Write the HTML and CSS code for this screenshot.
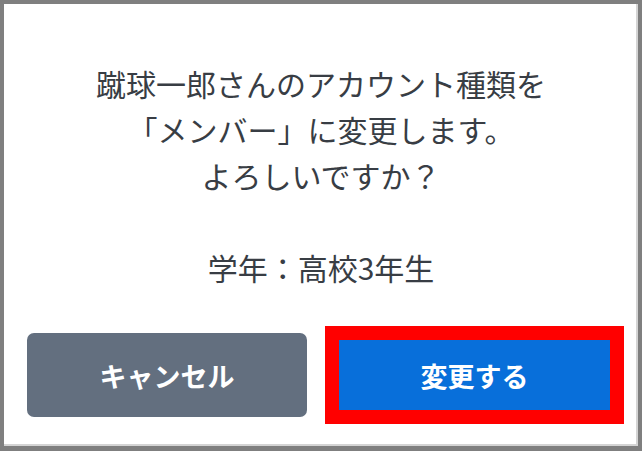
FILE: index.html
```html
<!DOCTYPE html>
<html lang="ja">
<head>
<meta charset="utf-8">
<title>アカウント種類の変更</title>
<link rel="stylesheet" href="styles.css">
</head>
<body>
<div class="dialog">
  <div class="message">
    <p class="line">蹴球一郎さんのアカウント種類を</p>
    <p class="line">「メンバー」に変更します。</p>
    <p class="line">よろしいですか？</p>
    <p class="line blank">&nbsp;</p>
    <p class="line">学年：高校3年生</p>
  </div>
  <div class="actions">
    <button class="btn btn-cancel" type="button">キャンセル</button>
    <div class="highlight">
      <button class="btn btn-primary" type="button">変更する</button>
    </div>
  </div>
</div>
</body>
</html>
```

FILE: styles.css
```css
html, body {
  margin: 0;
  padding: 0;
  background: #ffffff;
}

body {
  width: 642px;
  height: 451px;
  font-family: "Noto Sans CJK JP", "Noto Sans", sans-serif;
}

.dialog {
  box-sizing: border-box;
  width: 642px;
  height: 451px;
  border-style: solid;
  border-color: #7f7f7f;
  border-width: 4px 4px 5px 4px;
  box-shadow: inset -2px -2px 0 #d4d4d4;
  background: #ffffff;
  display: flex;
  flex-direction: column;
}

.message {
  padding-top: 56px;
  text-align: center;
  color: #383d44;
  font-size: 30px;
  line-height: 46px;
}

.line {
  margin: 0;
}

.actions {
  margin-top: 36px;
  padding-left: 23px;
  display: flex;
  align-items: center;
  gap: 18px;
}

.btn {
  font-family: "Noto Sans CJK JP", "Noto Sans", sans-serif;
  font-size: 27px;
  font-weight: 700;
  color: #ffffff;
  border: none;
  padding: 0;
  margin: 0;
}

.btn-cancel {
  width: 280px;
  height: 84px;
  border-radius: 7px;
  background: #636f7f;
}

.highlight {
  box-sizing: border-box;
  width: 299px;
  height: 98px;
  border: 14px solid #ff0000;
  display: flex;
}

.btn-primary {
  flex: 1;
  background: #086fda;
}
```
